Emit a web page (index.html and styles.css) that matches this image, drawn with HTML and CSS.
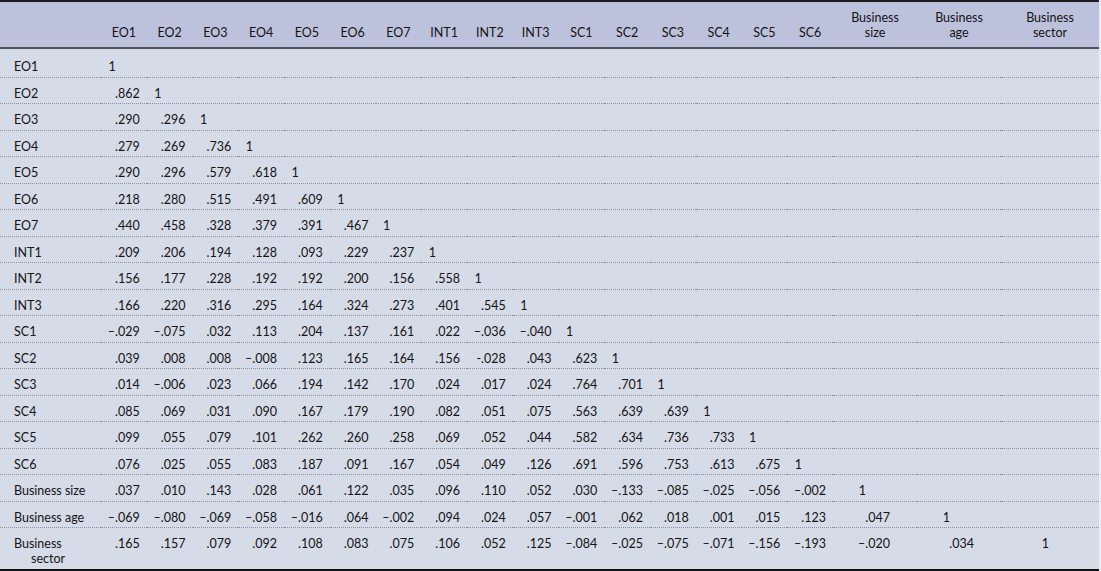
FILE: index.html
```html
<!DOCTYPE html>
<html lang="en">
<head>
<meta charset="utf-8">
<title>Correlation matrix</title>
<link rel="stylesheet" href="styles.css">
</head>
<body>
<table class="corr">
<colgroup>
<col class="c-lab">
<col class="c-n"><col class="c-n"><col class="c-n"><col class="c-n"><col class="c-n"><col class="c-n"><col class="c-n"><col class="c-n">
<col class="c-n"><col class="c-n"><col class="c-n"><col class="c-n"><col class="c-n"><col class="c-n"><col class="c-n"><col class="c-n">
<col class="c-b"><col class="c-b"><col class="c-s">
</colgroup>
<thead>
<tr>
<th></th>
<th>EO1</th><th>EO2</th><th>EO3</th><th>EO4</th><th>EO5</th><th>EO6</th><th>EO7</th>
<th>INT1</th><th>INT2</th><th>INT3</th>
<th>SC1</th><th>SC2</th><th>SC3</th><th>SC4</th><th>SC5</th><th>SC6</th>
<th>Business<br>size</th><th>Business<br>age</th><th>Business<br>sector</th>
</tr>
</thead>
<tbody>
<tr class="first"><td class="lab">EO1</td><td><span class="one">1</span></td><td></td><td></td><td></td><td></td><td></td><td></td><td></td><td></td><td></td><td></td><td></td><td></td><td></td><td></td><td></td><td></td><td></td><td></td></tr>
<tr><td class="lab">EO2</td><td>.862</td><td><span class="one">1</span></td><td></td><td></td><td></td><td></td><td></td><td></td><td></td><td></td><td></td><td></td><td></td><td></td><td></td><td></td><td></td><td></td><td></td></tr>
<tr><td class="lab">EO3</td><td>.290</td><td>.296</td><td><span class="one">1</span></td><td></td><td></td><td></td><td></td><td></td><td></td><td></td><td></td><td></td><td></td><td></td><td></td><td></td><td></td><td></td><td></td></tr>
<tr><td class="lab">EO4</td><td>.279</td><td>.269</td><td>.736</td><td><span class="one">1</span></td><td></td><td></td><td></td><td></td><td></td><td></td><td></td><td></td><td></td><td></td><td></td><td></td><td></td><td></td><td></td></tr>
<tr><td class="lab">EO5</td><td>.290</td><td>.296</td><td>.579</td><td>.618</td><td><span class="one">1</span></td><td></td><td></td><td></td><td></td><td></td><td></td><td></td><td></td><td></td><td></td><td></td><td></td><td></td><td></td></tr>
<tr><td class="lab">EO6</td><td>.218</td><td>.280</td><td>.515</td><td>.491</td><td>.609</td><td><span class="one">1</span></td><td></td><td></td><td></td><td></td><td></td><td></td><td></td><td></td><td></td><td></td><td></td><td></td><td></td></tr>
<tr><td class="lab">EO7</td><td>.440</td><td>.458</td><td>.328</td><td>.379</td><td>.391</td><td>.467</td><td><span class="one">1</span></td><td></td><td></td><td></td><td></td><td></td><td></td><td></td><td></td><td></td><td></td><td></td><td></td></tr>
<tr><td class="lab">INT1</td><td>.209</td><td>.206</td><td>.194</td><td>.128</td><td>.093</td><td>.229</td><td>.237</td><td><span class="one">1</span></td><td></td><td></td><td></td><td></td><td></td><td></td><td></td><td></td><td></td><td></td><td></td></tr>
<tr><td class="lab">INT2</td><td>.156</td><td>.177</td><td>.228</td><td>.192</td><td>.192</td><td>.200</td><td>.156</td><td>.558</td><td><span class="one">1</span></td><td></td><td></td><td></td><td></td><td></td><td></td><td></td><td></td><td></td><td></td></tr>
<tr><td class="lab">INT3</td><td>.166</td><td>.220</td><td>.316</td><td>.295</td><td>.164</td><td>.324</td><td>.273</td><td>.401</td><td>.545</td><td><span class="one">1</span></td><td></td><td></td><td></td><td></td><td></td><td></td><td></td><td></td><td></td></tr>
<tr><td class="lab">SC1</td><td>–.029</td><td>–.075</td><td>.032</td><td>.113</td><td>.204</td><td>.137</td><td>.161</td><td>.022</td><td>–.036</td><td>–.040</td><td><span class="one">1</span></td><td></td><td></td><td></td><td></td><td></td><td></td><td></td><td></td></tr>
<tr><td class="lab">SC2</td><td>.039</td><td>.008</td><td>.008</td><td>–.008</td><td>.123</td><td>.165</td><td>.164</td><td>.156</td><td>-.028</td><td>.043</td><td>.623</td><td><span class="one">1</span></td><td></td><td></td><td></td><td></td><td></td><td></td><td></td></tr>
<tr><td class="lab">SC3</td><td>.014</td><td>–.006</td><td>.023</td><td>.066</td><td>.194</td><td>.142</td><td>.170</td><td>.024</td><td>.017</td><td>.024</td><td>.764</td><td>.701</td><td><span class="one">1</span></td><td></td><td></td><td></td><td></td><td></td><td></td></tr>
<tr><td class="lab">SC4</td><td>.085</td><td>.069</td><td>.031</td><td>.090</td><td>.167</td><td>.179</td><td>.190</td><td>.082</td><td>.051</td><td>.075</td><td>.563</td><td>.639</td><td>.639</td><td><span class="one">1</span></td><td></td><td></td><td></td><td></td><td></td></tr>
<tr><td class="lab">SC5</td><td>.099</td><td>.055</td><td>.079</td><td>.101</td><td>.262</td><td>.260</td><td>.258</td><td>.069</td><td>.052</td><td>.044</td><td>.582</td><td>.634</td><td>.736</td><td>.733</td><td><span class="one">1</span></td><td></td><td></td><td></td><td></td></tr>
<tr><td class="lab">SC6</td><td>.076</td><td>.025</td><td>.055</td><td>.083</td><td>.187</td><td>.091</td><td>.167</td><td>.054</td><td>.049</td><td>.126</td><td>.691</td><td>.596</td><td>.753</td><td>.613</td><td>.675</td><td><span class="one">1</span></td><td></td><td></td><td></td></tr>
<tr><td class="lab">Business size</td><td>.037</td><td>.010</td><td>.143</td><td>.028</td><td>.061</td><td>.122</td><td>.035</td><td>.096</td><td>.110</td><td>.052</td><td>.030</td><td>–.133</td><td>–.085</td><td>–.025</td><td>–.056</td><td>–.002</td><td><span class="one">1</span></td><td></td><td></td></tr>
<tr><td class="lab">Business age</td><td>–.069</td><td>–.080</td><td>–.069</td><td>–.058</td><td>–.016</td><td>.064</td><td>–.002</td><td>.094</td><td>.024</td><td>.057</td><td>–.001</td><td>.062</td><td>.018</td><td>.001</td><td>.015</td><td>.123</td><td>.047</td><td><span class="one">1</span></td><td></td></tr>
<tr class="last"><td class="lab">Business<br>sector</td><td>.165</td><td>.157</td><td>.079</td><td>.092</td><td>.108</td><td>.083</td><td>.075</td><td>.106</td><td>.052</td><td>.125</td><td>–.084</td><td>–.025</td><td>–.075</td><td>–.071</td><td>–.156</td><td>–.193</td><td>–.020</td><td>.034</td><td><span class="one">1</span></td></tr>
</tbody>
</table>
</body>
</html>
```

FILE: styles.css
```css
html, body {
  margin: 0;
  padding: 0;
  background: #e9ecf2;
}

.corr {
  width: 1099px;
  table-layout: fixed;
  border-collapse: collapse;
  font-family: Lato, "Liberation Sans", sans-serif;
  font-size: 12.5px;
  line-height: 15px;
  color: #141416;
  background: #d5dbe7;
  border-top: 2px solid #1c1c1f;
  border-bottom: 2px solid #111114;
}

.c-lab { width: 101px; }
.c-n { width: 45.75px; }
.c-b { width: 84px; }
.c-s { width: 98px; }

.corr thead th {
  background: #bcc1dc;
  font-weight: normal;
  text-align: center;
  vertical-align: bottom;
  padding: 7.5px 0 7px;
  border-bottom: 2px solid #50535f;
}

.corr td {
  text-align: right;
  white-space: nowrap;
  padding: 8px 7px 2.5px 0;
  border-bottom: 1px dotted #8d919c;
  vertical-align: top;
}

.corr td:nth-child(n+18) { padding-right: 27px; }
.corr td:nth-child(20) { padding-right: 26px; }

.corr td.lab {
  text-align: left;
  white-space: normal;
  padding-left: 31px;
  text-indent: -17px;
  padding-right: 0;
}

.corr tr.first td { padding-top: 10.5px; }
.corr tr.last td { border-bottom: none; }

.one { margin-right: 24px; }
```
